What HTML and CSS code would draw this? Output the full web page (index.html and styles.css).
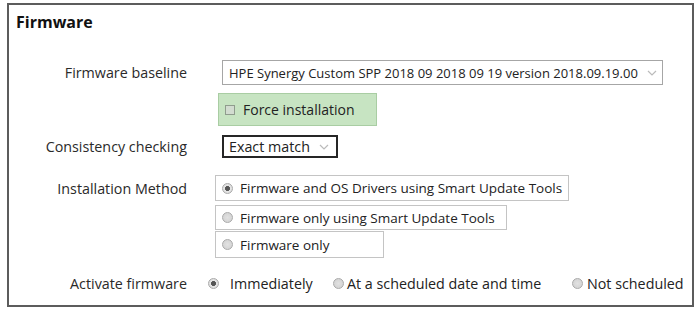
FILE: index.html
```html
<!DOCTYPE html>
<html lang="en">

<head>
    <meta charset="UTF-8">
    <title>Firmware</title>
    <link rel="stylesheet" href="styles.css">
</head>

<body>
    <section class="panel">
        <h2 class="title">Firmware</h2>

        <div class="form">
            <div class="row row-baseline">
                <div class="label">Firmware baseline</div>
                <div class="field">
                    <div class="select select-wide">
                        <span>HPE Synergy Custom SPP 2018 09 2018 09 19 version 2018.09.19.00</span>
                        <svg class="chevron" width="10" height="6" viewBox="0 0 10 6"><polyline points="1,1 5,5 9,1" fill="none" stroke="#bbb" stroke-width="1.2"/></svg>
                    </div>
                </div>
            </div>

            <div class="row row-force">
                <div class="label"></div>
                <div class="field">
                    <div class="force">
                        <span class="checkbox"></span>
                        <span>Force installation</span>
                    </div>
                </div>
            </div>

            <div class="row row-consistency">
                <div class="label">Consistency checking</div>
                <div class="field">
                    <div class="select select-small">
                        <span>Exact match</span>
                        <svg class="chevron" width="10" height="6" viewBox="0 0 10 6"><polyline points="1,1 5,5 9,1" fill="none" stroke="#bbb" stroke-width="1.2"/></svg>
                    </div>
                </div>
            </div>

            <div class="row row-method">
                <div class="label">Installation Method</div>
                <div class="field options">
                    <div class="option option-1"><span class="radio checked"></span>Firmware and OS Drivers using Smart Update Tools</div>
                    <div class="option option-2"><span class="radio"></span>Firmware only using Smart Update Tools</div>
                    <div class="option option-3"><span class="radio"></span>Firmware only</div>
                </div>
            </div>

            <div class="row row-activate">
                <div class="label">Activate firmware</div>
                <div class="field activate">
                    <div class="choice choice-1"><span class="radio checked"></span>Immediately</div>
                    <div class="choice choice-2"><span class="radio"></span>At a scheduled date and time</div>
                    <div class="choice choice-3"><span class="radio"></span>Not scheduled</div>
                </div>
            </div>
        </div>
    </section>
</body>

</html>
```

FILE: styles.css
```css
:root {
    --text: #222;
    --frame: #5c5c5c;
    --line: #a6a6a6;
    --soft-line: #c4c4c4;
    --green: #c7e4c2;
    --green-line: #a9cda3;
}

* {
    box-sizing: border-box;
    margin: 0;
    padding: 0;
}

body {
    background-color: #fff;
    color: var(--text);
    font-family: 'Open Sans', 'Noto Sans', sans-serif;
    font-size: 13px;
}

.panel {
    width: 687px;
    height: 304px;
    margin: 3px 0 0 7px;
    border: 2px solid var(--frame);
}

.title {
    font-size: 16px;
    font-weight: 700;
    line-height: 22px;
    color: #111;
    padding: 6px 0 0 7px;
}

.form {
    margin-top: 27px;
}

.row {
    display: flex;
    align-items: center;
}

.label {
    width: 178px;
    flex: none;
    text-align: right;
    margin-right: 19px;
    font-size: 14.3px;
    color: #2a2a2a;
}

.row-baseline {
    height: 25px;
}

.row-force {
    height: 33px;
    margin-top: 8px;
}

.row-consistency {
    height: 23px;
    margin-top: 9px;
}

.row-method {
    align-items: flex-start;
    margin-top: 17px;
}

.row-method .label {
    line-height: 26px;
    padding-top: 1px;
}

.row-activate {
    height: 20px;
    margin-top: 15px;
}

.select {
    display: flex;
    align-items: center;
    justify-content: space-between;
    background-color: #fff;
    white-space: nowrap;
}

.select-wide {
    width: 441px;
    height: 25px;
    margin-left: 16px;
    padding: 0 5px 0 6px;
    border: 1px solid var(--line);
}

.select-small {
    width: 116px;
    height: 23px;
    margin-left: 16px;
    padding: 0 7px 0 5px;
    border: 2px solid #262626;
    font-size: 14.3px;
}

.chevron {
    flex: none;
}

.force {
    display: flex;
    align-items: center;
    width: 159px;
    height: 33px;
    margin-left: 12px;
    padding-left: 6px;
    background-color: var(--green);
    border: 1px solid var(--green-line);
    font-size: 14px;
}

.checkbox {
    width: 10px;
    height: 10px;
    margin-right: 8px;
    border: 1px solid #8f9c8d;
    background-color: #d2dcd0;
}

.options {
    display: flex;
    flex-direction: column;
    align-items: flex-start;
    font-size: 13.5px;
}

.option {
    display: flex;
    align-items: center;
    margin-left: 9px;
    padding-left: 6px;
    border: 1px solid var(--soft-line);
    white-space: nowrap;
}

.option-1 {
    width: 354px;
    height: 26px;
}

.option-2 {
    width: 292px;
    height: 25px;
    margin-top: 4px;
}

.option-3 {
    width: 169px;
    height: 27px;
    margin-top: 1px;
}

.radio {
    flex: none;
    width: 11px;
    height: 11px;
    border-radius: 50%;
    border: 1px solid #aaa;
    background: radial-gradient(circle, #e2e2e2 0%, #cfcfcf 100%);
    margin-right: 7px;
}

.radio.checked {
    background: radial-gradient(circle, #555 0, #555 2.2px, #e6e6e6 2.8px, #d6d6d6 100%);
}

.activate {
    display: flex;
    align-items: center;
    white-space: nowrap;
    margin-left: 2px;
    font-size: 14.3px;
}

.choice {
    display: flex;
    align-items: center;
}

.choice-1 {
    width: 125px;
}

.choice-1 .radio {
    margin-right: 11px;
}

.choice-2 {
    width: 239px;
}

.choice-2 .radio {
    margin-right: 3px;
}

.choice-3 .radio {
    margin-right: 4px;
}
```
